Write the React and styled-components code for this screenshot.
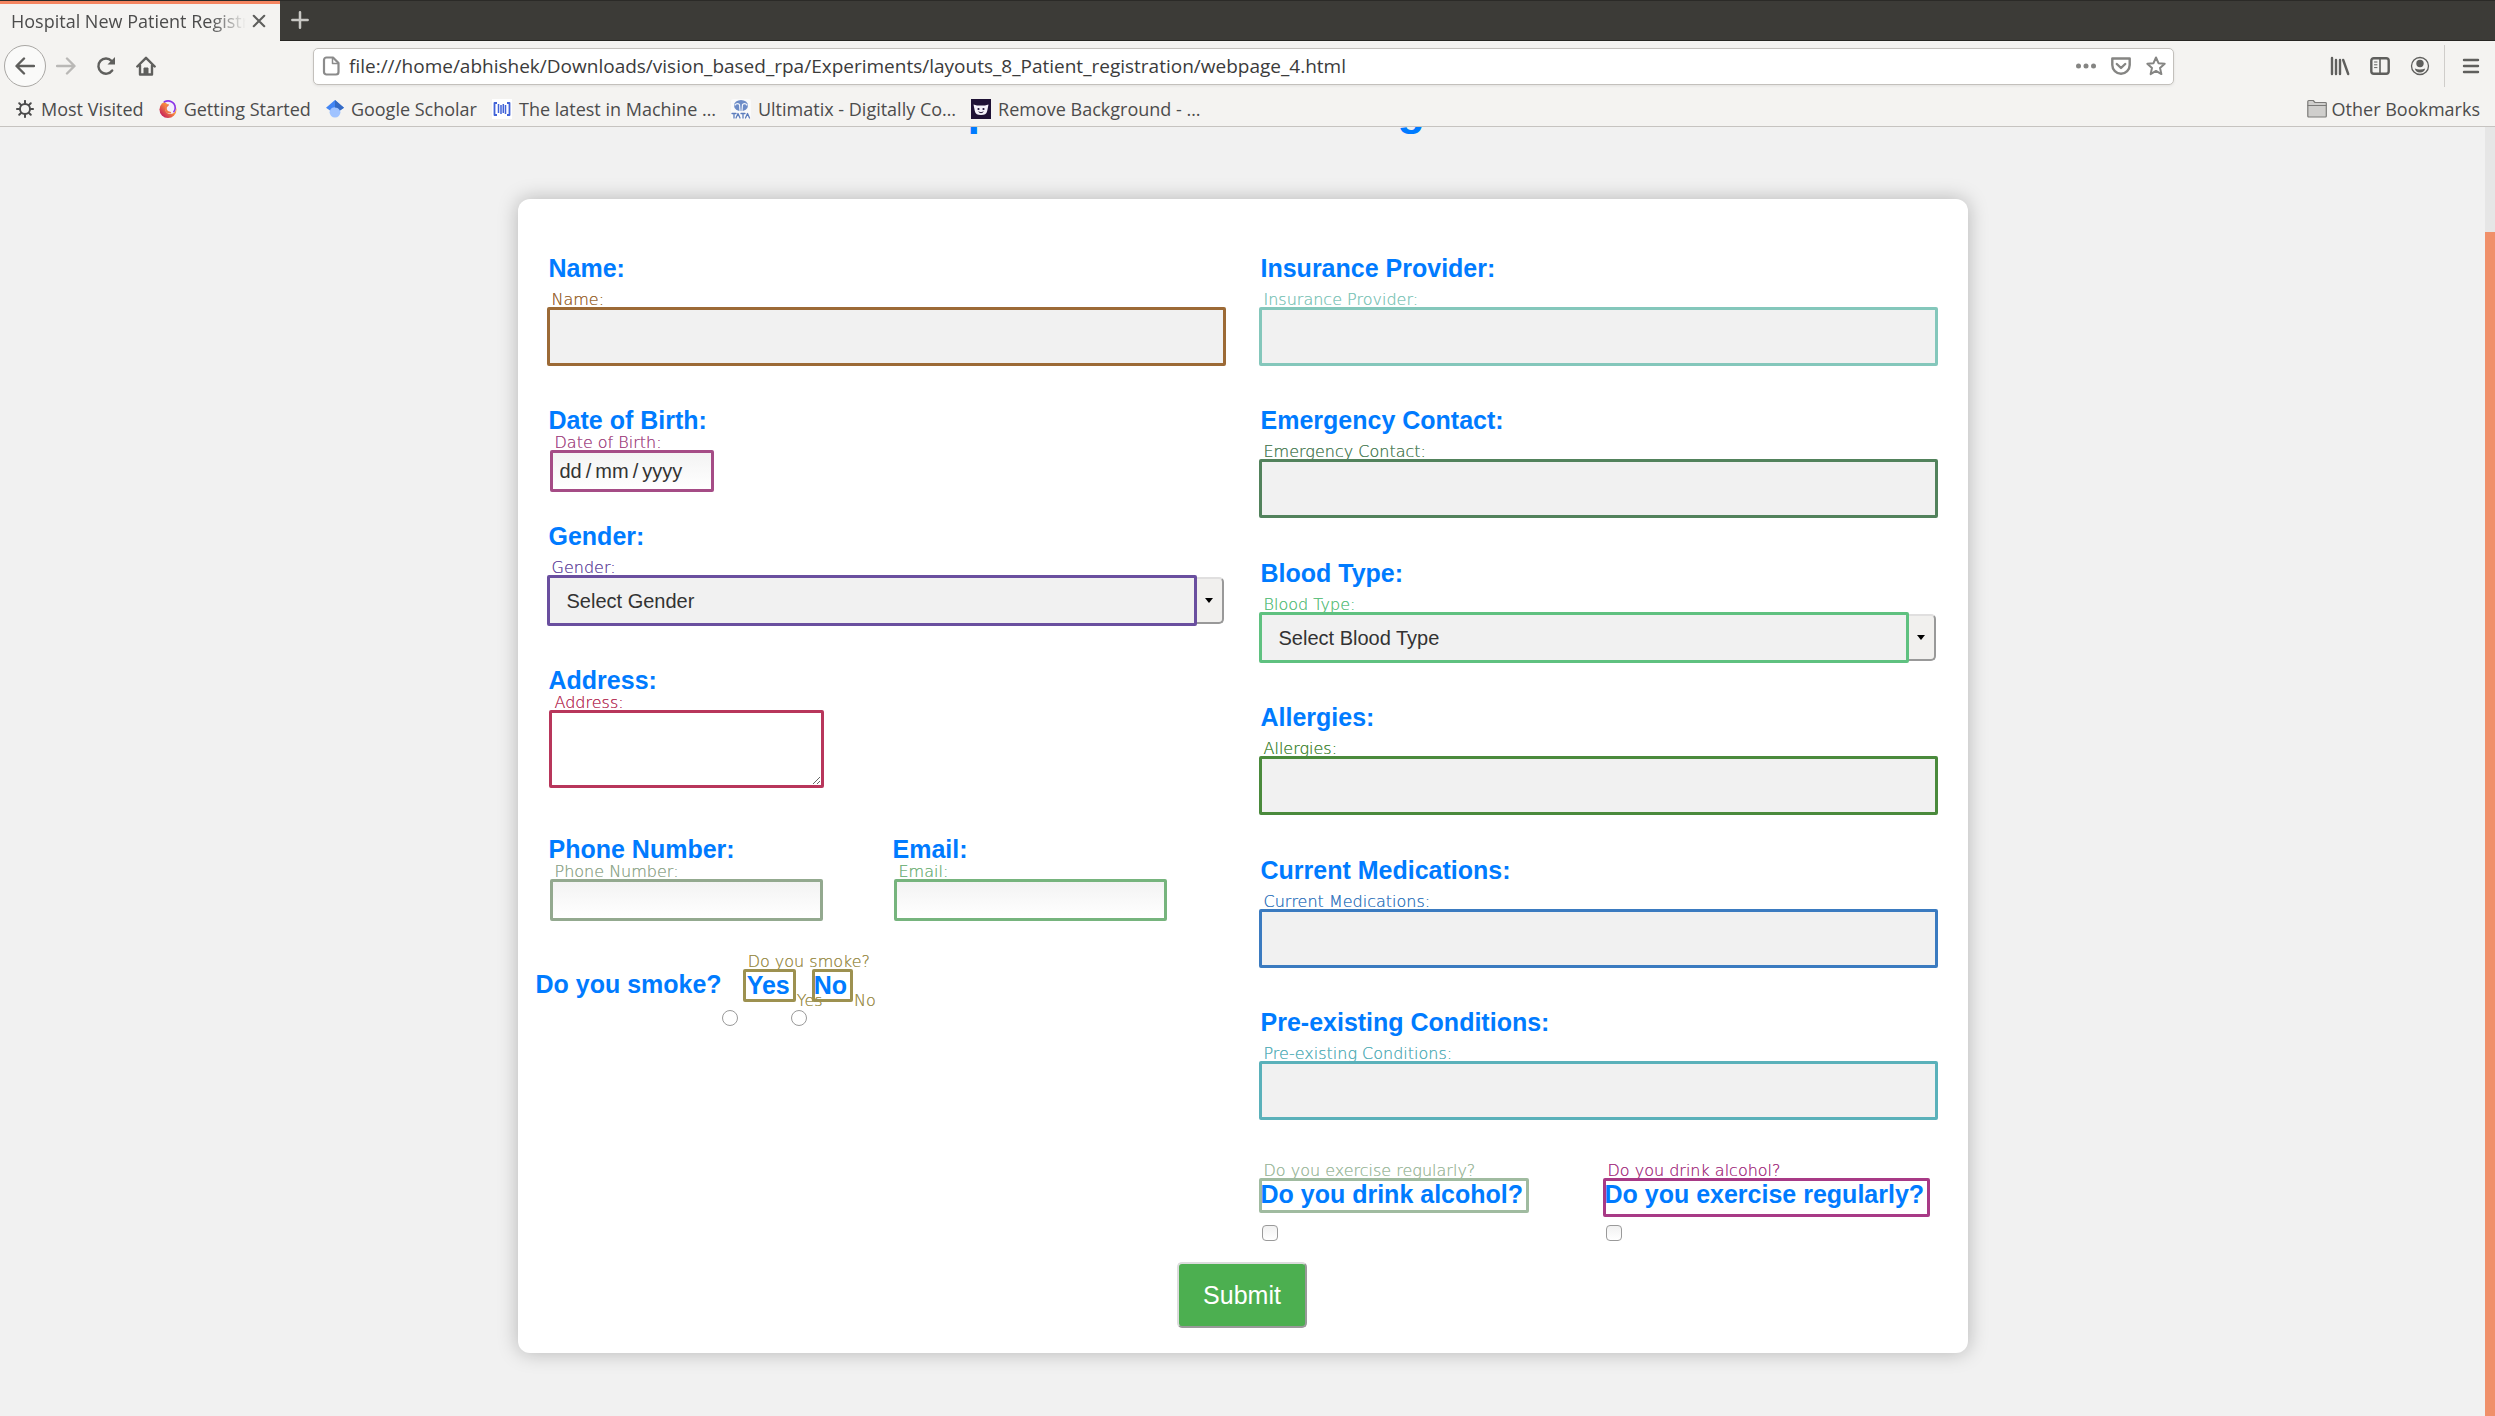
import React from "react";
import styled, { createGlobalStyle } from "styled-components";

const GlobalStyle = createGlobalStyle`
  * { box-sizing: border-box; }
  body { margin: 0; background: #f1f1f1; font-family: "Liberation Sans", Arial, sans-serif; }
  button, input, select, textarea { font: inherit; margin: 0; }
`;

/* ---------- browser window ---------- */

const Window = styled.div`
  display: flex;
  flex-direction: column;
  height: 100vh;
  overflow: hidden;
`;

const Chrome = styled.header`
  flex: none;
  background: #f4f3f1;
  border-bottom: 1px solid #c6c3c0;
  color: #4c4c4c;
  font-family: "Open Sans", "Noto Sans", sans-serif;
  font-size: 18px;
  line-height: 24px;
`;

const TabStrip = styled.div`
  display: flex;
  height: 41px;
  padding-top: 1px;
  background: #3c3b37;
  box-shadow: inset 0 -1px #262522, inset 0 1px #2b2a27;
`;

const Tab = styled.div`
  display: flex;
  align-items: center;
  justify-content: space-between;
  width: 280px;
  padding: 0 12px 3px 11px;
  border-top: 3px solid #f58560;
  background: #f4f3f1;
`;

const TabTitle = styled.span`
  width: 235px;
  overflow: hidden;
  white-space: nowrap;
  mask-image: linear-gradient(to right, #000 200px, transparent 235px);
`;

const IconButton = styled.button`
  display: flex;
  align-items: center;
  justify-content: center;
  flex: none;
  width: ${(p) => p.$w || 40}px;
  height: ${(p) => p.$h || 40}px;
  padding: 0;
  border: ${(p) => (p.$ring ? "1px solid #a9a7a4" : "0")};
  border-radius: ${(p) => (p.$ring ? "50%" : "0")};
  background: ${(p) => (p.$ring ? "#fafaf9" : "transparent")};
  color: ${(p) => p.$color || "#5f5f5d"};
`;

const NavBar = styled.nav`
  display: flex;
  align-items: center;
  height: 50px;
  padding: 0 4px;
`;

const AddressBar = styled.div`
  display: flex;
  align-items: center;
  flex: 1;
  height: 37px;
  margin: 0 146px 0 147px;
  padding: 0 0 0 7px;
  border: 1px solid #c3c0bc;
  border-radius: 5px;
  background: #fff;
  box-shadow: 0 1px 3px rgba(0, 0, 0, 0.08);
`;

const AddressInput = styled.input`
  flex: 1;
  min-width: 0;
  padding: 0 8px;
  border: 0;
  outline: 0;
  background: none;
  color: #3b3b3b;
  font-size: 19px;
`;

const Divider = styled.span`
  width: 1px;
  height: 42px;
  margin: 0 6px 0 4px;
  background: #cfcdca;
`;

const Bookmarks = styled.div`
  display: flex;
  align-items: center;
  gap: 15px;
  height: 35px;
  padding: 0 15px 0 16px;
`;

const Bookmark = styled.a`
  display: flex;
  align-items: center;
  gap: ${(p) => (p.$last ? 5 : 7)}px;
  margin-left: ${(p) => (p.$last ? "auto" : "0")};
  color: inherit;
  text-decoration: none;
  white-space: nowrap;
`;

/* ---------- page ---------- */

const Viewport = styled.div`
  display: flex;
  flex: 1;
  min-height: 0;
`;

const Page = styled.main`
  flex: 1;
  min-width: 0;
  overflow: hidden;
`;

const ScrollTrack = styled.div`
  width: 10px;
  padding-top: 105px;
  background: #e6e6e6;
`;

const ScrollThumb = styled.div`
  height: 100%;
  background: #f0906a;
`;

const Title = styled.h1`
  margin: -42px 0 64px;
  color: #007bff;
  font-size: 45px;
  line-height: 50px;
  text-align: center;
`;

const Card = styled.form`
  max-width: 1450px;
  margin: 0 auto;
  padding: 56px 30px 25px 29px;
  border-radius: 12px;
  background: #fff;
  box-shadow: 0 0 20px rgba(0, 0, 0, 0.25);
`;

const Columns = styled.div`
  display: grid;
  grid-template-columns: 1fr 1fr;
  gap: 33px;
`;

const FieldBox = styled.div`
  display: flex;
  flex-direction: column;
  align-items: flex-start;
  margin-bottom: ${(p) => p.$after}px;
  padding-left: ${(p) => (p.$inset ? 3 : 0)}px;
`;

const Label = styled.label`
  margin: 0 0 ${(p) => (p.$tight ? 0 : 9)}px ${(p) => (p.$inset ? -1 : 2)}px;
  color: #007bff;
  font-size: 25px;
  font-weight: 700;
  line-height: 27px;
  white-space: nowrap;
`;

/* The zero-offset shadow strengthens the hairline strokes. */
const Tag = styled.span`
  margin-left: 5px;
  padding-top: 1px;
  color: ${(p) => p.$color};
  font-family: "DejaVu Sans", sans-serif;
  font-size: 16px;
  font-weight: 200;
  line-height: 15px;
  text-shadow: 0 0 currentColor;
  white-space: nowrap;
`;

const Input = styled.input`
  width: ${(p) => (p.$w ? p.$w + "px" : "100%")};
  height: ${(p) => (p.$w ? 42 : 59)}px;
  padding: 0 ${(p) => (p.$w ? 7 : 10)}px;
  border: 3px solid ${(p) => p.$color};
  border-radius: 2px;
  outline: 0;
  background: ${(p) => (p.$w ? "linear-gradient(#f3f3f3, #ffffff)" : "#f1f1f1")};
  color: #333;
  font-size: 20px;
  &::placeholder { color: #333; opacity: 1; }
`;

const Area = styled.textarea`
  width: 275px;
  height: 78px;
  margin-left: -1px;
  border: 3px solid ${(p) => p.$color};
  border-radius: 2px;
  outline: 0;
  background: #fff;
  resize: both;
`;

const SelectRow = styled.div`
  display: flex;
  align-items: center;
  width: 100%;
  padding-right: 2px;
`;

const Select = styled.select`
  flex: 1;
  height: 51px;
  padding: 0 17px;
  border: 3px solid ${(p) => p.$color};
  border-radius: 2px;
  outline: 0;
  appearance: none;
  background: #f1f1f1;
  color: #333;
  font-size: 20px;
`;

const Arrow = styled.span`
  display: flex;
  align-items: center;
  justify-content: center;
  width: 27px;
  height: 47px;
  border-style: solid;
  border-width: 2px 2px 2px 0;
  border-color: #e0dfdf #999 #999;
  border-radius: 0 5px 5px 0;
  background: #f1f0ee;
`;

const Pair = styled.div`
  display: grid;
  grid-template-columns: 344px auto;
`;

const Smoke = styled.div`
  display: flex;
  align-items: flex-start;
`;

const Question = styled.span`
  margin: 18px 21px 0 -11px;
  color: #007bff;
  font-size: 25px;
  font-weight: 700;
  line-height: 27px;
  white-space: nowrap;
`;

const Options = styled.div`
  display: flex;
  gap: 16px;
`;

const Option = styled.div`
  display: flex;
  flex-direction: column;
  align-items: flex-start;
`;

const BoxedLabel = styled.label`
  position: relative;
  height: ${(p) => p.$h}px;
  padding: 3px 6px 0 ${(p) => p.$pad || 2}px;
  border-radius: 2px;
  outline: 3px solid ${(p) => p.$color};
  outline-offset: -3px;
  color: #007bff;
  font-size: 25px;
  font-weight: 700;
  line-height: 27px;
  white-space: nowrap;
`;

const SideTag = styled(Tag)`
  position: absolute;
  left: 100%;
  bottom: -6px;
  margin-left: 1px;
`;

const Radio = styled.input`
  appearance: none;
  width: 16px;
  height: 16px;
  margin: 8px 0 0 -21px;
  border: 1px solid #9a9a9a;
  border-radius: 50%;
  background: #fff;
`;

const Check = styled.input`
  appearance: none;
  width: 16px;
  height: 16px;
  margin: auto 0 0 3px;
  border: 1px solid #9a9a9a;
  border-radius: 4px;
  background: linear-gradient(#f1f1f1, #fff);
`;

const CheckCell = styled.div`
  display: flex;
  flex-direction: column;
  align-items: flex-start;
  height: 79px;
`;

const Submit = styled.button`
  display: block;
  width: 130px;
  height: 66px;
  margin: 21px auto 0;
  border: 2px solid;
  border-color: #dcdcdc #999 #999 #dcdcdc;
  border-radius: 5px;
  background: #4caf50;
  color: #fff;
  font-size: 25px;
`;

/* ---------- icons ---------- */

const Svg = ({ s = 20, children, ...rest }) => (
  <svg width={s} height={s} viewBox="0 0 20 20" fill="none" stroke="currentColor" strokeWidth="2.4" strokeLinecap="round" strokeLinejoin="round" aria-hidden="true" {...rest}>
    {children}
  </svg>
);

const BackIcon = () => <Svg><path d="M19 10H2M9 2.5 1.5 10 9 17.500" /></Svg>;
const ForwardIcon = () => <Svg><path d="M1 10h17M11 2.500 18.500 10 11 17.500" /></Svg>;
const ReloadIcon = () => (
  <Svg>
    <path d="M16.200 14.500A7.600 7.600 0 1 1 15.500 4.800" />
    <path d="M19 1v7.500h-7.500z" fill="currentColor" stroke="none" />
  </Svg>
);
const HomeIcon = () => (
  <Svg>
    <path d="M1.300 10.500 10 1.800l8.700 8.700M4 9.500V18.500h12V9.500" />
    <path d="M8 18v-6h4v6z" fill="currentColor" strokeWidth="1" />
  </Svg>
);
const CloseIcon = () => <Svg s={14} strokeWidth="3"><path d="m2.500 2.500 15 15m0-15-15 15" /></Svg>;
const PlusIcon = () => <Svg s={18} strokeWidth="2.800"><path d="M10 1.500v17M1.500 10h17" /></Svg>;
const FileIcon = () => (
  <Svg stroke="#8b8b8b" strokeWidth="2.200">
    <path d="M5.500 1.500H12l5.500 5.500v9a2.500 2.500 0 0 1-2.500 2.500H5.500A2.500 2.500 0 0 1 3 16V4a2.500 2.500 0 0 1 2.500-2.500z" />
    <path d="M11.500 2v5.500H17" strokeWidth="1.500" />
  </Svg>
);
const DotsIcon = () => (
  <Svg fill="currentColor" stroke="none">
    <circle cx="2.500" cy="10" r="2.500" /><circle cx="10" cy="10" r="2.500" /><circle cx="17.500" cy="10" r="2.500" />
  </Svg>
);
const PocketIcon = () => (
  <Svg>
    <path d="M1.300 2.500h17.400v6.500a8.700 8.700 0 0 1-17.400 0z" />
    <path d="m5.800 8 4.200 4 4.200-4" />
  </Svg>
);
const StarIcon = () => <Svg strokeWidth="2"><path d="m10 1.500 2.500 5.700 6.200.6-4.700 4.100 1.400 6.200L10 14.900l-5.400 3.200L6 11.900 1.300 7.800l6.200-.6z" /></Svg>;
const LibraryIcon = () => <Svg strokeWidth="2.400"><path d="M2 2v16M6 4v14M10 4v14M13.200 4l5 14" /></Svg>;
const SidebarIcon = () => (
  <Svg>
    <rect x="1.300" y="2.200" width="17.400" height="15.600" rx="2.500" />
    <path d="M10 2.500v15" strokeWidth="1.600" /><path d="M4.500 6H7M4.500 8.800H7M4.500 11.600H7" strokeWidth="1" />
  </Svg>
);
const AccountIcon = () => (
  <Svg>
    <circle cx="10" cy="10" r="8.500" strokeWidth="1.300" />
    <circle cx="10" cy="7.500" r="3.700" fill="currentColor" stroke="none" />
    <path d="M4.800 12.500c3 1.200 7.400 1.200 10.400 0-.5 2.500-2.500 4-5.200 4s-4.700-1.500-5.200-4z" fill="currentColor" stroke="none" />
  </Svg>
);
const MenuIcon = () => <Svg><path d="M3 4h14M3 10h14M3 16h14" /></Svg>;
const GearIcon = () => (
  <Svg s={18}>
    <circle cx="10" cy="10" r="5.600" strokeWidth="2.200" />
    <path d="M10 1v3M10 16v3M1 10h3M16 10h3M3.600 3.600l2 2M14.400 14.400l2 2M3.600 16.400l2-2M14.400 5.600l2-2" strokeWidth="2.200" />
  </Svg>
);
const FirefoxIcon = () => (
  <Svg s={18} stroke="none">
    <defs>
      <linearGradient id="flame" x1="0.900" y1="0.200" x2="0.200" y2="0.900">
        <stop offset="0" stopColor="#ffc93c" /><stop offset="0.450" stopColor="#f5843e" /><stop offset="1" stopColor="#c9245a" />
      </linearGradient>
    </defs>
    <circle cx="10" cy="10.500" r="9.500" fill="url(#flame)" />
    <path d="M5 1.800C11-1 18.800 2 18.800 9.500c0 3.500-2.500 6-5.800 6-4 0-6.500-3-6-6.500.3-2 1.600-3.300 3-3.600C8.500 4 7 3 5 1.800z" fill="#f3eefb" />
    <path d="M6 2C11-.5 18 2 18 9c0 1.500-.5 3-1.500 4" stroke="#8a35e8" strokeWidth="1.800" />
    <path d="M10 5.500c-4 2-3 8.500 2.500 8.500" stroke="#f07a48" strokeWidth="2" />
  </Svg>
);
const ScholarIcon = () => (
  <Svg s={18} stroke="none">
    <circle cx="10" cy="13.500" r="6" fill="#a0c3ff" />
    <path d="M10 0 0 8.500l4.500 3.200a6 6 0 0 1 11 0L20 8.500z" fill="#4285f4" />
    <path d="M10 0v8.300a6 6 0 0 1 5.500 3.400L20 8.500z" fill="#356ac3" />
  </Svg>
);
const BracketIcon = () => (
  <Svg strokeLinecap="butt" stroke="#4163d8" strokeWidth="1.800">
    <rect width="20" height="20" fill="#fff" stroke="none" />
    <path d="M5 4H2.500v12H5M15 4h2.500v12H15" /><path d="M6.500 5v9M9 6v9M11.300 5v9M13.500 6v9" strokeWidth="1.500" />
  </Svg>
);
const TataIcon = () => (
  <Svg stroke="none">
    <rect width="20" height="20" rx="2" fill="#fafafa" />
    <ellipse cx="10" cy="6.500" rx="7" ry="5.500" fill="#6d8cc7" />
    <path d="M9 12 8.500 5.500C7 4.500 5 4.800 4 6M11 12l.5-6.500c1.500-1 3.500-.7 4.500.5" stroke="#eef2fa" strokeWidth="1.200" />
    <path d="M1 14.500h4M3 14.500V19M5 19l2-4.500L9 19M10 14.500h4M12 14.500V19M14.500 19l2-4.500 2 4.500" stroke="#5c7dbd" strokeWidth="1.300" />
  </Svg>
);
const MaskIcon = () => (
  <Svg stroke="none">
    <rect width="20" height="20" fill="#1f1235" />
    <path d="M2.500 5.500 6 6.500h8l3.500-1-1.300 6.500c-.7 3-2.700 4-6.200 4s-5.500-1-6.200-4z" fill="#f5f3fa" />
    <circle cx="7.500" cy="10" r="1.100" fill="#1f1235" /><circle cx="12.500" cy="10" r="1.100" fill="#1f1235" />
    <path d="M8 13c1.300 1 2.700 1 4 0" stroke="#1f1235" strokeWidth="1" />
  </Svg>
);
const FolderIcon = () => (
  <Svg stroke="#7b7a78" strokeWidth="1.200">
    <path d="M.8 17V2.500c0-.6.300-1 1-1h4.400l1.800 2h10.500c.5 0 .8.300.8.800V17c0 .6-.3 1-.8 1H1.800c-.6 0-1-.4-1-1z" fill="#cfcecc" />
    <path d="M1 6.500h18" />
  </Svg>
);

/* ---------- form pieces ---------- */

function TextField({ id, label, color, width, after, type = "text" }) {
  const small = Boolean(width);
  return (
    <FieldBox $after={after} $inset={small}>
      <Label htmlFor={id} $tight={small} $inset={small}>{label}</Label>
      <Tag $color={color}>{label}</Tag>
      <Input id={id} type={type} $color={color} $w={width} />
    </FieldBox>
  );
}

function SelectField({ id, label, color, option, after }) {
  return (
    <FieldBox $after={after}>
      <Label htmlFor={id}>{label}</Label>
      <Tag $color={color}>{label}</Tag>
      <SelectRow>
        <Select id={id} $color={color}><option>{option}</option></Select>
        <Arrow aria-hidden="true"><svg width="8" height="5" viewBox="0 0 8 5"><path d="M0 0h8L4 5z" fill="#000" /></svg></Arrow>
      </SelectRow>
    </FieldBox>
  );
}

const bookmarks = [
  ["Most Visited", GearIcon],
  ["Getting Started", FirefoxIcon],
  ["Google Scholar", ScholarIcon],
  ["The latest in Machine …", BracketIcon],
  ["Ultimatix - Digitally Co…", TataIcon],
  ["Remove Background - …", MaskIcon],
];

const SMOKE = "#9d9150";

export default function App() {
  return (
    <Window>
      <GlobalStyle />
      <Chrome>
        <TabStrip>
          <Tab>
            <TabTitle>Hospital New Patient Registration</TabTitle>
            <IconButton $w={18} $h={24} aria-label="Close tab"><CloseIcon /></IconButton>
          </Tab>
          <IconButton $color="#c9c8c4" $h={38} aria-label="New tab"><PlusIcon /></IconButton>
        </TabStrip>
        <NavBar>
          <IconButton $ring $w={42} $h={42} aria-label="Back"><BackIcon /></IconButton>
          <IconButton $color="#b9b8b6" aria-label="Forward"><ForwardIcon /></IconButton>
          <IconButton aria-label="Reload"><ReloadIcon /></IconButton>
          <IconButton aria-label="Home"><HomeIcon /></IconButton>
          <AddressBar>
            <FileIcon />
            <AddressInput
              aria-label="Address"
              defaultValue="file:///home/abhishek/Downloads/vision_based_rpa/Experiments/layouts_8_Patient_registration/webpage_4.html"
            />
            <IconButton $w={35} $h={34} $color="#858583" aria-label="Page actions"><DotsIcon /></IconButton>
            <IconButton $w={35} $h={34} $color="#858583" aria-label="Save to Pocket"><PocketIcon /></IconButton>
            <IconButton $w={35} $h={34} $color="#858583" aria-label="Bookmark"><StarIcon /></IconButton>
          </AddressBar>
          <IconButton aria-label="Library"><LibraryIcon /></IconButton>
          <IconButton aria-label="Sidebars"><SidebarIcon /></IconButton>
          <IconButton aria-label="Account"><AccountIcon /></IconButton>
          <Divider />
          <IconButton aria-label="Menu"><MenuIcon /></IconButton>
        </NavBar>
        <Bookmarks>
          {bookmarks.map(([text, Icon]) => (
            <Bookmark key={text} href="#"><Icon />{text}</Bookmark>
          ))}
          <Bookmark href="#" $last><FolderIcon />Other Bookmarks</Bookmark>
        </Bookmarks>
      </Chrome>

      <Viewport>
        <Page>
          <Title>Hospital New Patient Registration</Title>
          <Card onSubmit={(e) => e.preventDefault()}>
            <Columns>
              <div>
                <TextField id="name" label="Name:" color="#9c6a36" after={41} />
                <FieldBox $after={31} $inset>
                  <Label htmlFor="dob" $tight $inset>Date of Birth:</Label>
                  <Tag $color="#a54c86">Date of Birth:</Tag>
                  <Input id="dob" type="text" placeholder={"dd\u2009/\u2009mm\u2009/\u2009yyyy"} $color="#a54c86" $w={164} />
                </FieldBox>
                <SelectField id="gender" label="Gender:" color="#6a4f9f" option="Select Gender" after={41} />
                <FieldBox $after={48} $inset>
                  <Label htmlFor="address" $tight $inset>Address:</Label>
                  <Tag $color="#b8365b">Address:</Tag>
                  <Area id="address" $color="#b8365b" />
                </FieldBox>
                <Pair>
                  <TextField id="phone" label="Phone Number:" color="#93a98f" width={273} type="tel" after={32} />
                  <TextField id="email" label="Email:" color="#76b47d" width={273} type="email" after={32} />
                </Pair>
                <Smoke role="radiogroup" aria-label="Do you smoke?">
                  <Question>Do you smoke?</Question>
                  <div>
                    <Tag as="div" $color={SMOKE}>Do you smoke?</Tag>
                    <Options>
                      <Option>
                        <BoxedLabel htmlFor="yes" $color={SMOKE} $h={33} $pad={4}>Yes<SideTag $color={SMOKE}>Yes</SideTag></BoxedLabel>
                        <Radio id="yes" type="radio" name="smoke" />
                      </Option>
                      <Option>
                        <BoxedLabel htmlFor="no" $color={SMOKE} $h={33}>No<SideTag $color={SMOKE}>No</SideTag></BoxedLabel>
                        <Radio id="no" type="radio" name="smoke" />
                      </Option>
                    </Options>
                  </div>
                </Smoke>
              </div>
              <div>
                <TextField id="insurance" label="Insurance Provider:" color="#84c7bb" after={41} />
                <TextField id="emergency" label="Emergency Contact:" color="#52825c" after={42} />
                <SelectField id="blood" label="Blood Type:" color="#5fc180" option="Select Blood Type" after={41} />
                <TextField id="allergies" label="Allergies:" color="#4a8a3c" after={42} />
                <TextField id="medications" label="Current Medications:" color="#3b7bc0" after={41} />
                <TextField id="conditions" label="Pre-existing Conditions:" color="#5ab1ba" after={42} />
                <Pair>
                  <CheckCell>
                    <Tag $color="#a0bba0">Do you exercise regularly?</Tag>
                    <BoxedLabel htmlFor="alcohol" $color="#a0bba0" $h={35}>Do you drink alcohol?</BoxedLabel>
                    <Check id="alcohol" type="checkbox" />
                  </CheckCell>
                  <CheckCell>
                    <Tag $color="#a83a86">Do you drink alcohol?</Tag>
                    <BoxedLabel htmlFor="exercise" $color="#a83a86" $h={39}>Do you exercise regularly?</BoxedLabel>
                    <Check id="exercise" type="checkbox" />
                  </CheckCell>
                </Pair>
              </div>
            </Columns>
            <Submit type="submit">Submit</Submit>
          </Card>
        </Page>
        <ScrollTrack><ScrollThumb /></ScrollTrack>
      </Viewport>
    </Window>
  );
}
